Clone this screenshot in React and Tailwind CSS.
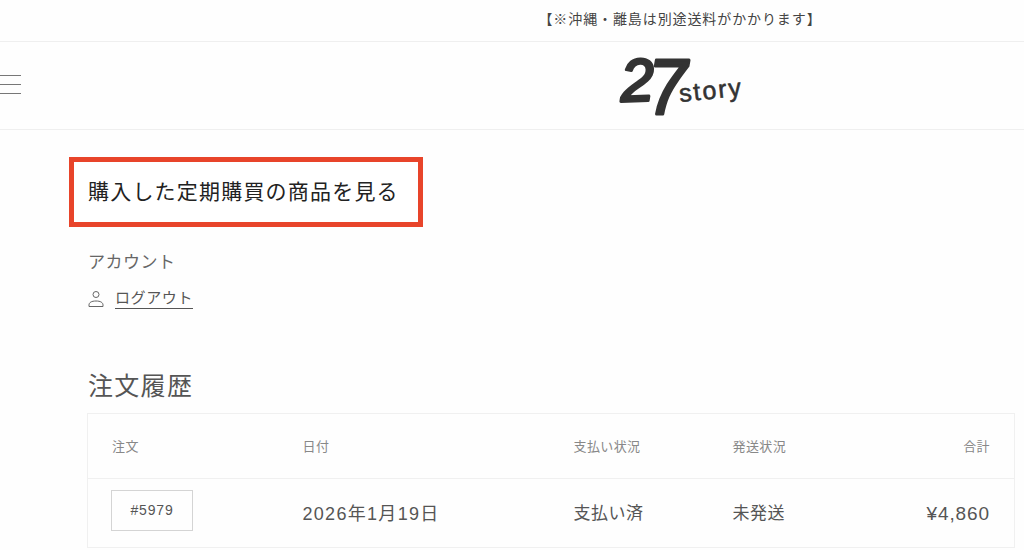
const jp = '[font-family:"Liberation_Sans","Noto_Sans_CJK_JP",sans-serif]'

function Logo() {
  return (
    <svg width="126" height="66" viewBox="0 0 126 66" className="block overflow-visible">
      <g fill="#333" stroke="#333" strokeLinejoin="round" strokeLinecap="round" fontFamily="'Liberation Sans', sans-serif" fontStyle="italic">
        <text x="2" y="49" fontSize="60" strokeWidth="3" transform="rotate(-2 20 40)">2</text>
        <text transform="translate(29 62) scale(1.4 1.55)" fontSize="50" strokeWidth="2">7</text>
        <text x="60" y="47" fontSize="25" strokeWidth="0.6" letterSpacing="2" fontStyle="normal" transform="rotate(-6 90 40)">story</text>
      </g>
    </svg>
  )
}

function UserIcon() {
  return (
    <svg width="16" height="16" viewBox="0 0 16 16" fill="none" stroke="#666" strokeWidth="1" className="block">
      <circle cx="8" cy="3.5" r="3" />
      <path d="M1 15.500v-1.500c0-2.500 2.500-4 7-4s7 1.500 7 4v1.500z" />
    </svg>
  )
}

export default function App() {
  return (
    <div className={`min-h-[550px] h-[550px] overflow-hidden bg-[#fefefe] text-[#555] ${jp}`}>
      {/* announcement */}
      <div className="flex h-[42px] items-center justify-center border-b border-[#efefef] pl-[336px] pb-[3px] text-[14px] tracking-[0.9px] text-[#444]">
        【※沖縄・離島は別途送料がかかります】
      </div>

      {/* header */}
      <header className="flex h-[88px] items-center border-b border-[#efefef]">
        <div className="flex w-[21px] flex-col gap-2 pb-[3px]">
          <span className="h-px bg-[#777]"></span>
          <span className="h-px bg-[#777]"></span>
          <span className="h-px bg-[#777]"></span>
        </div>
        <div className="ml-[598px] pb-[1px]">
          <Logo />
        </div>
      </header>

      <main className="pl-[87px] pr-[9px]">
        <div className="-ml-[18px] mt-[27px] flex h-[70px] w-[354px] items-center border-[5px] border-[#e8442a] bg-white pl-[14px]">
          <a className="text-[21px] tracking-[1.2px] text-[#222]">購入した定期購買の商品を見る</a>
        </div>

        <h2 className="mt-[22px] pl-px text-[17px] leading-6 tracking-[0.5px] text-[#666] pt-[2px]">アカウント</h2>
        <div className="mt-[13px] flex items-center gap-[11px] pl-px">
          <UserIcon />
          <a className="border-b border-[#555] text-[15px] leading-[20px] tracking-[0.6px] text-[#555]">ログアウト</a>
        </div>

        <h2 className="mt-[60px] pl-px text-[25px] leading-[34px] tracking-[1.3px] text-[#555]">注文履歴</h2>

        <table className="mt-[10px] w-[928px] table-fixed border border-[#f0f0f0]">
          <colgroup>
            <col className="w-[191px]" />
            <col className="w-[271px]" />
            <col className="w-[159px]" />
            <col className="w-[158px]" />
            <col />
          </colgroup>
          <thead>
            <tr className="h-[65px] border-b border-[#f0f0f0] text-left text-[13px] tracking-[0.4px] text-[#888]">
              <th className="pl-6 pt-[2px] font-normal">注文</th>
              <th className="pl-6 pt-[2px] font-normal">日付</th>
              <th className="pl-6 pt-[2px] font-normal">支払い状況</th>
              <th className="pl-6 pt-[2px] font-normal">発送状況</th>
              <th className="pr-6 pt-[2px] text-right font-normal">合計</th>
            </tr>
          </thead>
          <tbody>
            <tr className="h-[69px] border-b border-[#f0f0f0] text-[17px] tracking-[0.5px] text-[#555]">
              <td className="pl-[23px]">
                <a className="mb-[5px] flex h-[41px] w-[82px] items-center justify-center border border-[#d4d4d4] text-[14px] tracking-[0.8px]">#5979</a>
              </td>
              <td className="pl-6 pt-[2px] text-[18px] tracking-[1.3px]">2026年1月19日</td>
              <td className="pl-6 pt-[2px]">支払い済</td>
              <td className="pl-6 pt-[2px]">未発送</td>
              <td className="pr-6 pt-[2px] text-right text-[19px] tracking-[0.9px]">¥4,860</td>
            </tr>
          </tbody>
        </table>
      </main>
    </div>
  )
}
